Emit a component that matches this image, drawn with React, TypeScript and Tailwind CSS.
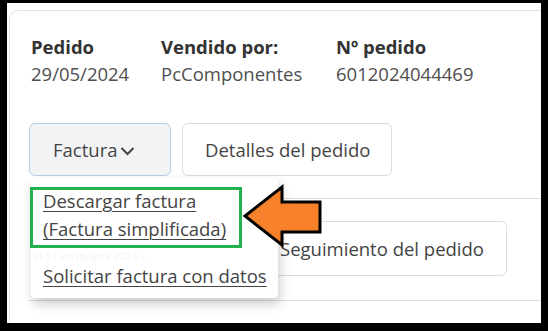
import React from "react";

export default function App() {
  return (
    <div
      className="relative w-[548px] h-[331px] bg-black pt-[3px] pl-[7px] pr-[7px] pb-[8px] overflow-hidden"
      style={{ fontFamily: '"Open Sans", "Noto Sans", sans-serif' }}
    >
      <div className="w-full h-full bg-white overflow-hidden">
        <div className="ml-[2px] mt-[7px] w-[600px] h-[400px] border-l border-t border-[#e2e2e2] rounded-tl-[9px] pt-[22px] pl-[21px]">
          <div className="flex text-[18.5px] leading-[27px]">
            <div className="w-[130px]">
              <div className="font-bold text-[#333]">Pedido</div>
              <div className="text-[#4f4f4f]">29/05/2024</div>
            </div>
            <div className="w-[175px]">
              <div className="font-bold text-[#333]">Vendido por:</div>
              <div className="text-[#4f4f4f]">PcComponentes</div>
            </div>
            <div>
              <div className="font-bold text-[#333]">Nº pedido</div>
              <div className="text-[#4f4f4f]">6012024044469</div>
            </div>
          </div>

          <div className="flex gap-[11px] mt-[36px] -ml-[2px]">
            <div className="w-[142px] h-[53px] rounded-[6px] border border-[#b9cde6] bg-[#f2f3f5] flex items-center pl-[23px] text-[18.5px] text-[#444]">
              Factura
              <svg width="15" height="10" viewBox="0 0 15 10" className="ml-[3px] mt-[3px]">
                <path d="M1.5 2 L7.5 8 L13.5 2" fill="none" stroke="#444" strokeWidth="2" />
              </svg>
            </div>
            <div className="w-[210px] h-[53px] rounded-[6px] border border-[#dcdcdc] bg-white flex items-center pl-[22px] text-[18.5px] text-[#444]">
              Detalles del pedido
            </div>
          </div>

          <div className="mt-[22px] -ml-[2px] border-t border-[#dedede]" />

          <div className="flex items-center -ml-[2px] h-[101px] pb-[2px]">
            <div className="w-[227px]" />
            <div className="w-[251px] h-[55px] rounded-[6px] border border-[#dcdcdc] bg-white flex items-center pl-[23px] text-[18.5px] text-[#444]">
              Seguimiento del pedido
            </div>
          </div>

          <div className="-ml-[2px] border-t border-[#dedede]" />
        </div>
      </div>

      {/* Dropdown menu */}
      <div className="absolute left-[31px] top-[178px] w-[247px] h-[120px] bg-white rounded-b-[4px] shadow-[2px_6px_12px_rgba(0,0,0,0.2)]">
        <div className="absolute left-[2px] top-[72px] text-[11px] leading-[11px] text-[#f3f3f3] whitespace-nowrap">
          el 31 en mayos 2024 ...
        </div>
        <div className="relative pt-[9px] pl-[12px] text-[18.5px] leading-[28px] text-[#444]">
          <div className="underline underline-offset-[3px] decoration-[1px]">
            Descargar factura
            <br />
            (Factura simplificada)
          </div>
          <div className="mt-[19px] underline underline-offset-[3px] decoration-[1px] whitespace-nowrap">
            Solicitar factura con datos
          </div>
        </div>
      </div>

      {/* Green highlight box */}
      <div className="absolute left-[30px] top-[187px] w-[212px] h-[61px] border-[3px] border-[#22b14c]" />

      {/* Orange arrow */}
      <svg className="absolute left-0 top-0" width="548" height="331" viewBox="0 0 548 331">
        <polygon
          points="245,216 282,187 282,202 320,202 320,232 282,232 282,245"
          fill="#f7812a"
          stroke="#000"
          strokeWidth="3"
          strokeLinejoin="miter"
        />
      </svg>
    </div>
  );
}
